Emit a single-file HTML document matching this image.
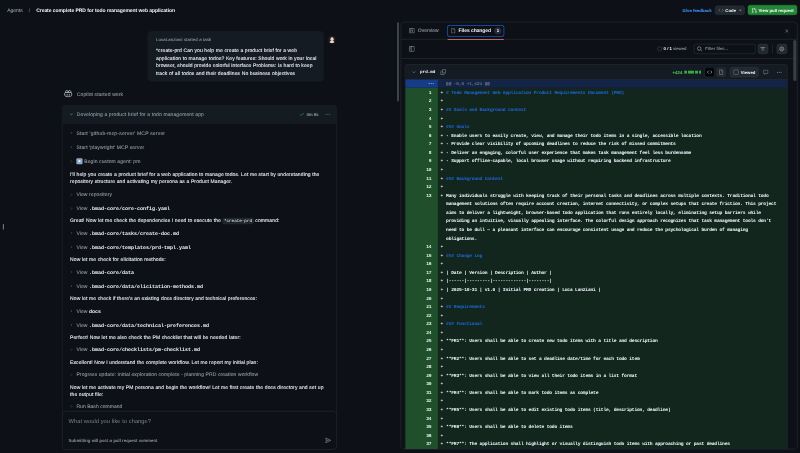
<!DOCTYPE html>
<html>
<head>
<meta charset="utf-8">
<title>Create complete PRD for todo management web application</title>
<style>
*{box-sizing:border-box;margin:0;padding:0}
html,body{width:800px;height:453px;overflow:hidden;background:#0d1117}
body{font-family:"Liberation Sans",sans-serif;color:#f0f6fc}
#root{position:absolute;left:0;top:0;width:2240px;height:1269px;transform:scale(0.35714);transform-origin:0 0;filter:brightness(1);text-rendering:geometricPrecision;background:#0d1117;font-size:14px;line-height:20px;overflow:hidden}
.mono{font-family:"Liberation Mono",monospace}
svg{display:block}
/* header */
#crumb{position:absolute;left:20px;top:18px;font-size:14px;line-height:20px;white-space:nowrap}
#crumb .a{color:#9198a1;-webkit-text-stroke:0.25px #9198a1}
#crumb .s{color:#9198a1;margin:0 17px 0 17px}
#crumb .t{color:#f0f6fc;font-weight:bold;letter-spacing:-0.18px}
#fb{position:absolute;left:1911px;top:19.5px;font-size:12px;line-height:20px;font-weight:bold;color:#3f89ea;-webkit-text-stroke:0.3px #3f89ea;white-space:nowrap}
.btn{position:absolute;height:28px;border-radius:6px;font-size:12px;line-height:26px;font-weight:bold;white-space:nowrap}
#codebtn{left:2002px;top:15.5px;height:25px;line-height:24px;width:83px;background:#212830;border:1px solid #3d444d;color:#f0f6fc}
#prbtn{left:2094px;top:14px;width:138px;background:#238636;border:1px solid #2ea043;color:#fff}
/* left pane */
#col{position:absolute;left:174px;top:0;width:768px;height:1269px}
#bubble{position:absolute;left:239px;top:87px;width:494px;height:141px;background:#151b23;border-radius:12px}
#bubble .who{position:absolute;left:24px;top:15px;font-size:12px;line-height:20px;color:#9198a1;white-space:nowrap;letter-spacing:0.31px;-webkit-text-stroke:0.25px #9198a1}
#bubble .msg{position:absolute;left:24px;top:43.8px;font-size:14px;line-height:21.2px;color:#f0f6fc;white-space:nowrap;font-weight:normal;-webkit-text-stroke:0.2px #f0f6fc;letter-spacing:0.3px}
#avatar{position:absolute;left:743px;top:99px;width:25px;height:25px}
#started{position:absolute;left:5px;top:253px;height:20px;white-space:nowrap;color:#9198a1;letter-spacing:0.3px;-webkit-text-stroke:0.25px #9198a1}
#started svg{position:absolute;left:0;top:-2px}
#started span{position:absolute;left:36px;top:0}
#card{position:absolute;left:0;top:295px;width:769px;height:870px;border-bottom:none;border:1px solid #2f353d;border-radius:6px;background:#0d1117}
#cardh{position:absolute;left:0;top:0;width:767px;height:50px;background:#151b23;border-bottom:1px solid #2f353d;border-radius:6px 6px 0 0}
#cardh .ttl{position:absolute;left:40px;top:14px;color:#9198a1;white-space:nowrap;letter-spacing:0.32px;-webkit-text-stroke:0.25px #9198a1}
#cardh .tm{position:absolute;left:683px;top:14px;font-size:12px;color:#a0a7b0;white-space:nowrap;letter-spacing:0.2px;-webkit-text-stroke:0.3px #a0a7b0}
.tool{position:absolute;left:18px;height:20px;white-space:nowrap;color:#9198a1;-webkit-text-stroke:0.25px #9198a1}
.tool .cv{position:absolute;left:0;top:2px}
.tool>span{position:absolute;left:22px;top:0}
.tool b{-webkit-text-stroke:0;color:#f0f6fc;font-size:14px;font-weight:bold;letter-spacing:0}
.para{position:absolute;left:22px;line-height:21px;white-space:nowrap;color:#f0f6fc;font-weight:normal;-webkit-text-stroke:0.2px #f0f6fc;letter-spacing:0.33px}
.para code{font-family:"Liberation Mono",monospace;font-size:11.9px;background:#1f242d;border-radius:6px;padding:2px 5px;margin:0 0 0 -1px;font-weight:normal;-webkit-text-stroke:0;letter-spacing:0}
.emo{display:inline-block;width:17px;height:17px;background:#86a6c8;border-radius:3px;vertical-align:-3px;margin-right:5px;position:relative;border:1px solid #b9cbe0}
.emo i{position:absolute;left:5px;top:3px;border-left:7px solid #fff;border-top:4.5px solid transparent;border-bottom:4.5px solid transparent}
#inp{position:absolute;left:0;top:1151px;width:769px;height:108px;border:1px solid #3d444d;border-radius:12px;background:#0d1117}
#inp .ph{position:absolute;left:17px;top:18px;color:#7a818b;font-size:16px;line-height:22px;white-space:nowrap;letter-spacing:0.17px}
#inp .sub{position:absolute;left:17px;top:71px;color:#9ba2ab;font-size:12px;white-space:nowrap;letter-spacing:0.42px;-webkit-text-stroke:0.25px #9ba2ab}
#inp svg{position:absolute;left:735px;top:72px}
/* right panel */
#panel{position:absolute;left:1122px;top:61px;width:1111px;height:1197px;border:1px solid #3d444d;border-radius:12px;background:#0d1117;overflow:hidden}
#tabs{position:absolute;left:0;top:0;width:1110px;height:48px;border-bottom:1px solid #3d444d}
#tools{position:absolute;left:0;top:48px;width:1110px;height:54px;border-bottom:1px solid #3d444d}
#ov{position:absolute;left:22px;top:14px;color:#9198a1;white-space:nowrap;-webkit-text-stroke:0.25px #9198a1}
#ov svg{position:absolute;left:0;top:2px}
#ov span{position:absolute;left:25px;top:0}
#fc{position:absolute;left:131px;top:10px;width:156px;height:29px;border-radius:5px;box-shadow:0 0 0 2px #1b58bd;white-space:nowrap}
#fc svg{position:absolute;left:7px;top:6px}
#fc b{position:absolute;left:30px;top:4px;letter-spacing:-0.2px}
#fc i{position:absolute;left:130px;top:4px;width:20px;height:20px;border-radius:10px;background:#262d37;font-style:normal;font-size:12px;font-weight:bold;text-align:center;line-height:20px}
#fcu{position:absolute;left:130px;top:46.5px;width:158px;height:2px;background:#f78166;border-radius:1px}
#file{position:absolute;left:11px;top:118px;width:1071px;height:1200px;border:1px solid #3d444d;border-radius:6px;overflow:hidden;background:#151b23}
#fh{position:absolute;left:0;top:0;width:1070px;height:41.5px;background:#151b23;border-bottom:1px solid #3d444d}
#hunk{position:absolute;left:0;top:41.5px;width:1070px;height:23.5px;background:#132446}
#hunk .g{position:absolute;left:0;top:0;width:90.5px;height:23.5px;background:#163b87}
#hunk .t{position:absolute;left:114px;top:0;font:12px/22px "Liberation Mono",monospace;color:#9198a1;white-space:nowrap}
#lines{position:absolute;left:0;top:65px;padding-top:1.5px;width:1070px;min-height:1200px;background:#12261e}
#gut{position:absolute;left:0;top:0;width:90.5px;height:1200px;background:#1f502b}
.dl{position:relative;font:13px/24px "Liberation Mono",monospace;letter-spacing:-0.578px;color:#f0f6fc;white-space:nowrap;padding-left:114px;min-height:24px;font-weight:bold}
.dl .ln{position:absolute;left:0;top:0;width:73px;text-align:right;color:#e6f2e8;font-weight:bold}
.dl .mk{position:absolute;left:98.5px;top:0;font-weight:normal}
.dl .h{color:#1d66d8;font-weight:bold}
#sb{position:absolute;left:2221px;top:112px;width:9px;height:115px;border-radius:5px;background:#383d46}
</style>
</head>
<body>
<div id="root">
  <div id="crumb"><span class="a">Agents</span><span class="s">/</span><span class="t">Create complete PRD for todo management web application</span></div>
  <div id="fb">Give feedback</div>
  <div class="btn" id="codebtn"><svg style="position:absolute;left:8px;top:4px" width="16" height="16" viewBox="0 0 16 16"><path d="M5.500 4L1.500 8l4 4M10.500 4l4 4-4 4" fill="none" stroke="#9198a1" stroke-width="1.5"/></svg><span style="position:absolute;left:28px;top:0">Code</span><svg style="position:absolute;left:62px;top:4px" width="16" height="16" viewBox="0 0 16 16"><path d="M4.500 6.500h7L8 10.500z" fill="#9198a1"/></svg></div>
  <div class="btn" id="prbtn"><svg style="position:absolute;left:9px;top:6px" width="16" height="16" viewBox="0 0 16 16"><circle cx="3.500" cy="3.500" r="1.700" fill="none" stroke="#fff" stroke-width="1.400"/><circle cx="3.500" cy="12.500" r="1.700" fill="none" stroke="#fff" stroke-width="1.400"/><circle cx="12.500" cy="12.500" r="1.700" fill="none" stroke="#fff" stroke-width="1.400"/><path d="M3.500 5.200v5.600M12.500 10.800V6a2 2 0 00-2-2H8M9.800 1.800L7.600 4l2.200 2.200" fill="none" stroke="#fff" stroke-width="1.400"/></svg><span style="position:absolute;left:29px;top:1.5px">View pull request</span></div>

  <div id="col">
    <div id="bubble">
      <div class="who">LucaLanziani started a task</div>
      <div class="msg">*create-prd Can you help me create a product brief for a web<br>application to manage todos? Key features: Should work in your local<br>browser, should provide colorful interface Problems: Is hard to keep<br>track of all todos and their deadlines No business objectives</div>
    </div>
    <svg id="avatar" viewBox="0 0 24 24"><circle cx="12" cy="12" r="12" fill="#1d1716"/><ellipse cx="12" cy="10.5" rx="6.5" ry="7" fill="#33231f"/><ellipse cx="12.200" cy="10.300" rx="4.400" ry="5.400" fill="#cdb9b8"/><ellipse cx="12.500" cy="10" rx="3" ry="4" fill="#e4d6d6"/><ellipse cx="12" cy="18" rx="6.500" ry="2.700" fill="#e6e6e6"/></svg>
    <div id="started"><svg width="24" height="22" viewBox="0 0 24 22"><path d="M2 11.5c0-2 1-3 2.5-3.5h15c1.500.5 2.500 1.500 2.500 3.500v4c0 1.500-4 4.500-10 4.500s-10-3-10-4.500z" fill="none" stroke="#d1d7e0" stroke-width="2"/><path d="M4.500 8.500c-.8-3 .5-6 3.500-6s3.800 2 3.500 5M19.500 8.500c.8-3-.5-6-3.500-6s-3.800 2-3.500 5" fill="none" stroke="#d1d7e0" stroke-width="2"/><path d="M9 13v3M15 13v3" stroke="#d1d7e0" stroke-width="2" stroke-linecap="round"/></svg><span>Copilot started work</span></div>
    <div id="card">
      <div id="cardh">
        <svg style="position:absolute;left:17px;top:16px" width="16" height="16" viewBox="0 0 16 16"><path d="M4 6l4 4 4-4" fill="none" stroke="#9198a1" stroke-width="1.5"/></svg>
        <div class="ttl">Developing a product brief for a todo management app</div>
        <svg style="position:absolute;left:662px;top:16px" width="16" height="16" viewBox="0 0 16 16"><path d="M3 8.5l3 3 7-7" fill="none" stroke="#3fb950" stroke-width="1.7"/></svg>
        <div class="tm">3m 8s</div>
        <svg style="position:absolute;left:735px;top:16px" width="16" height="16" viewBox="0 0 16 16"><circle cx="3" cy="8" r="1.4" fill="#656c76"/><circle cx="8" cy="8" r="1.4" fill="#656c76"/><circle cx="13" cy="8" r="1.4" fill="#656c76"/></svg>
      </div>
    </div>
    <div id="items" style="position:absolute;left:0;top:0">
<div class="tool" style="top:362px;letter-spacing:0.54px"><svg class="cv" width="16" height="16" viewBox="0 0 16 16"><path d="M6.5 5l3 3-3 3" fill="none" stroke="#6a717b" stroke-width="1.4"/></svg><span>Start 'github-mcp-server' MCP server</span></div>
<div class="tool" style="top:402px;letter-spacing:0.38px"><svg class="cv" width="16" height="16" viewBox="0 0 16 16"><path d="M6.5 5l3 3-3 3" fill="none" stroke="#6a717b" stroke-width="1.4"/></svg><span>Start 'playwright' MCP server</span></div>
<div class="tool" style="top:442px;letter-spacing:0.28px"><svg class="cv" width="16" height="16" viewBox="0 0 16 16"><path d="M6.5 5l3 3-3 3" fill="none" stroke="#6a717b" stroke-width="1.4"/></svg><span><span class="emo"><i></i></span>Begin custom agent: pm</span></div>
<div class="para" style="top:476.5px">I'll help you create a product brief for a web application to manage todos. Let me start by understanding the<br>repository structure and activating my persona as a Product Manager.</div>
<div class="tool" style="top:534.5px;letter-spacing:0.28px"><svg class="cv" width="16" height="16" viewBox="0 0 16 16"><path d="M6.5 5l3 3-3 3" fill="none" stroke="#6a717b" stroke-width="1.4"/></svg><span>View repository</span></div>
<div class="tool" style="top:573.5px;letter-spacing:0.28px"><svg class="cv" width="16" height="16" viewBox="0 0 16 16"><path d="M6.5 5l3 3-3 3" fill="none" stroke="#6a717b" stroke-width="1.4"/></svg><span>View <b class="mono">.bmad-core/core-config.yaml</b></span></div>
<div class="para" style="top:607.0px">Great! Now let me check the dependencies I need to execute the <code>*create-prd</code> command:</div>
<div class="tool" style="top:642px;letter-spacing:0.28px"><svg class="cv" width="16" height="16" viewBox="0 0 16 16"><path d="M6.5 5l3 3-3 3" fill="none" stroke="#6a717b" stroke-width="1.4"/></svg><span>View <b class="mono">.bmad-core/tasks/create-doc.md</b></span></div>
<div class="tool" style="top:682px;letter-spacing:0.28px"><svg class="cv" width="16" height="16" viewBox="0 0 16 16"><path d="M6.5 5l3 3-3 3" fill="none" stroke="#6a717b" stroke-width="1.4"/></svg><span>View <b class="mono">.bmad-core/templates/prd-tmpl.yaml</b></span></div>
<div class="para" style="top:716.5px">Now let me check for elicitation methods:</div>
<div class="tool" style="top:752px;letter-spacing:0.28px"><svg class="cv" width="16" height="16" viewBox="0 0 16 16"><path d="M6.5 5l3 3-3 3" fill="none" stroke="#6a717b" stroke-width="1.4"/></svg><span>View <b class="mono">.bmad-core/data</b></span></div>
<div class="tool" style="top:791px;letter-spacing:0.28px"><svg class="cv" width="16" height="16" viewBox="0 0 16 16"><path d="M6.5 5l3 3-3 3" fill="none" stroke="#6a717b" stroke-width="1.4"/></svg><span>View <b class="mono">.bmad-core/data/elicitation-methods.md</b></span></div>
<div class="para" style="top:825.5px">Now let me check if there's an existing docs directory and technical preferences:</div>
<div class="tool" style="top:861px;letter-spacing:0.28px"><svg class="cv" width="16" height="16" viewBox="0 0 16 16"><path d="M6.5 5l3 3-3 3" fill="none" stroke="#6a717b" stroke-width="1.4"/></svg><span>View <b class="mono">docs</b></span></div>
<div class="tool" style="top:900px;letter-spacing:0.28px"><svg class="cv" width="16" height="16" viewBox="0 0 16 16"><path d="M6.5 5l3 3-3 3" fill="none" stroke="#6a717b" stroke-width="1.4"/></svg><span>View <b class="mono">.bmad-core/data/technical-preferences.md</b></span></div>
<div class="para" style="top:934.5px">Perfect! Now let me also check the PM checklist that will be needed later:</div>
<div class="tool" style="top:969px;letter-spacing:0.28px"><svg class="cv" width="16" height="16" viewBox="0 0 16 16"><path d="M6.5 5l3 3-3 3" fill="none" stroke="#6a717b" stroke-width="1.4"/></svg><span>View <b class="mono">.bmad-core/checklists/pm-checklist.md</b></span></div>
<div class="para" style="top:1003.5px">Excellent! Now I understand the complete workflow. Let me report my initial plan:</div>
<div class="tool" style="top:1039px;letter-spacing:0.28px"><svg class="cv" width="16" height="16" viewBox="0 0 16 16"><path d="M6.5 5l3 3-3 3" fill="none" stroke="#6a717b" stroke-width="1.4"/></svg><span>Progress update: Initial exploration complete - planning PRD creation workflow</span></div>
<div class="para" style="top:1073.5px">Now let me activate my PM persona and begin the workflow! Let me first create the docs directory and set up<br>the output file:</div>
<div class="tool" style="top:1128px;letter-spacing:0.12px"><svg class="cv" width="16" height="16" viewBox="0 0 16 16"><path d="M6.5 5l3 3-3 3" fill="none" stroke="#6a717b" stroke-width="1.4"/></svg><span>Run Bash command</span></div>
    </div>
    <div id="inp">
      <div class="ph">What would you like to change?</div>
      <div class="sub">Submitting will post a pull request comment</div>
      <svg width="18" height="18" viewBox="0 0 16 16"><path d="M1.800 2l12.700 6-12.700 6 1.700-6z M3.500 8h6" fill="none" stroke="#9198a1" stroke-width="1.400" stroke-linejoin="round"/></svg>
    </div>
  </div>

  <div id="panel">
    <div id="tabs">
      <div id="ov"><svg width="16" height="16" viewBox="0 0 16 16"><rect x="0.8" y="1.8" width="14.4" height="12.4" rx="1.5" fill="none" stroke="#a4abb5" stroke-width="1.6"/><path d="M3.5 5.5h4M3.5 8h4M3.5 10.500h2.500M10 5v6" fill="none" stroke="#a4abb5" stroke-width="1.5"/></svg><span>Overview</span></div>
      <div id="fc"><svg width="16" height="16" viewBox="0 0 16 16"><path d="M3.5 1.5h6l3 3v10h-9z M9.5 1.5v3h3" fill="none" stroke="#9198a1" stroke-width="1.4" stroke-linejoin="round"/></svg><b>Files changed</b><i>1</i></div>
      <div id="fcu"></div>
      <svg style="position:absolute;left:1072px;top:17px" width="16" height="16" viewBox="0 0 16 16"><path d="M4 4l8 8M12 4l-8 8" stroke="#9198a1" stroke-width="1.5"/></svg>
    </div>
    <div id="tools">
      <svg style="position:absolute;left:22px;top:19px" width="16" height="16" viewBox="0 0 16 16"><rect x="1" y="1" width="14" height="14" rx="1.5" fill="none" stroke="#a4abb5" stroke-width="1.6"/><path d="M6.500 1v14M3 4.500h1.500M3 7h1.500" stroke="#a4abb5" stroke-width="1.5"/></svg>
      <svg style="position:absolute;left:716px;top:19px" width="16" height="16" viewBox="0 0 16 16"><circle cx="8" cy="8" r="6" fill="none" stroke="#3d444d" stroke-width="1.8"/></svg>
      <div style="position:absolute;left:735px;top:17px;font-size:12px;white-space:nowrap"><b>0 / 1</b> <span style="color:#9198a1;-webkit-text-stroke:0.25px #9198a1">viewed</span></div>
      <div style="position:absolute;left:820px;top:13px;width:173px;height:28px;border:1px solid #3d444d;border-radius:6px">
        <svg style="position:absolute;left:7px;top:5px" width="16" height="16" viewBox="0 0 16 16"><circle cx="6.800" cy="6.800" r="5" fill="none" stroke="#a4abb5" stroke-width="1.700"/><path d="M10.500 10.500l4.500 4.500" stroke="#a4abb5" stroke-width="1.700"/></svg>
        <div style="position:absolute;left:31px;top:3px;font-size:12px;color:#8b929c;-webkit-text-stroke:0.25px #8b929c;letter-spacing:0.2px;white-space:nowrap">Filter files...</div>
      </div>
      <div style="position:absolute;left:999px;top:13px;width:29px;height:28px;border:1px solid #3d444d;border-radius:6px;background:#212830"><svg style="position:absolute;left:5px;top:5px" width="16" height="16" viewBox="0 0 16 16"><path d="M1.500 4h13M4 8h8M6.500 12h3" stroke="#a4abb5" stroke-width="1.700"/></svg></div>
      <div style="position:absolute;left:1039px;top:14px;width:1px;height:26px;background:#3d444d"></div><div style="position:absolute;left:1052px;top:13px;width:29px;height:28px;border:1px solid #3d444d;border-radius:6px;background:#212830"><svg style="position:absolute;left:5px;top:5px" width="16" height="16" viewBox="0 0 16 16"><circle cx="8" cy="8" r="6.400" fill="none" stroke="#9aa1ab" stroke-width="1.800" stroke-dasharray="2.700 2.327"/><circle cx="8" cy="8" r="5" fill="none" stroke="#9aa1ab" stroke-width="1.500"/><circle cx="8" cy="8" r="2" fill="none" stroke="#9aa1ab" stroke-width="1.300"/></svg></div>
    </div>
    <div id="file">
      <div id="fh">
        <svg style="position:absolute;left:16px;top:13px" width="16" height="16" viewBox="0 0 16 16"><path d="M4 6l4 4 4-4" fill="none" stroke="#9198a1" stroke-width="1.5"/></svg>
        <div class="mono" style="position:absolute;left:41px;top:11px;font-size:12px;font-weight:bold;white-space:nowrap">prd.md</div>
        <svg style="position:absolute;left:98px;top:13px" width="16" height="16" viewBox="0 0 16 16"><rect x="5.5" y="0.800" width="9.700" height="9.700" rx="1.200" fill="none" stroke="#a4abb5" stroke-width="1.600"/><path d="M3 5.500H1.800a1 1 0 00-1 1v7.700a1 1 0 001 1h7.700a1 1 0 001-1V13" fill="none" stroke="#a4abb5" stroke-width="1.600"/></svg>
        <div style="position:absolute;left:748px;top:11px;font-size:12px;font-weight:bold;color:#3fb950;-webkit-text-stroke:0.3px #3fb950;letter-spacing:0.3px;white-space:nowrap">+424</div>
        <div style="position:absolute;left:781px;top:17px;width:48px;height:8px;background:repeating-linear-gradient(90deg,#35aa48 0 8px,transparent 8px 10px)"></div>
        <div style="position:absolute;left:838px;top:7px;width:28px;height:28px;border-radius:6px;background:#010409;border:1px solid #3d444d"><svg style="position:absolute;left:5px;top:5px" width="16" height="16" viewBox="0 0 16 16"><path d="M5.5 4L1.5 8l4 4M10.5 4l4 4-4 4" fill="none" stroke="#f0f6fc" stroke-width="1.5"/></svg></div>
        <div style="position:absolute;left:870px;top:7px;width:28px;height:28px;border-radius:6px;background:#212830"><svg style="position:absolute;left:6px;top:6px" width="16" height="16" viewBox="0 0 16 16"><path d="M3.5 1.5h6l3 3v10h-9z M9.5 1.5v3h3" fill="none" stroke="#9198a1" stroke-width="1.4" stroke-linejoin="round"/></svg></div>
        <div style="position:absolute;left:909px;top:7px;width:80px;height:28px;border-radius:6px;background:#212830;border:1px solid #3d444d"><div style="position:absolute;left:9px;top:6px;width:14px;height:14px;border:1.500px solid #a4abb5;border-radius:2.500px"></div><b style="position:absolute;left:29px;top:3px;font-size:12px">Viewed</b></div>
        <svg style="position:absolute;left:1001px;top:13px" width="16" height="16" viewBox="0 0 16 16"><path d="M2.5 2.5h11a1 1 0 011 1v7a1 1 0 01-1 1H8l-3 3v-3H2.5a1 1 0 01-1-1v-7a1 1 0 011-1z" fill="none" stroke="#9198a1" stroke-width="1.4" stroke-linejoin="round"/></svg>
        <svg style="position:absolute;left:1039px;top:13px" width="16" height="16" viewBox="0 0 16 16"><circle cx="3" cy="8" r="1.4" fill="#9198a1"/><circle cx="8" cy="8" r="1.4" fill="#9198a1"/><circle cx="13" cy="8" r="1.4" fill="#9198a1"/></svg>
      </div>
      <div id="hunk"><div class="g"></div><div style="position:absolute;left:65px;top:-1px;font:bold 14px/22px 'Liberation Sans',sans-serif;color:#dbe6f5;letter-spacing:1px">&middot;&middot;&middot;</div><div class="t">@@ -0,0 +1,424 @@</div></div>
      <div id="lines"><div id="gut"></div>
<div class="dl"><span class="ln">1</span><span class="mk">+</span><span class="h"># Todo Management Web Application Product Requirements Document (PRD)</span></div>
<div class="dl"><span class="ln">2</span><span class="mk">+</span><span></span></div>
<div class="dl"><span class="ln">3</span><span class="mk">+</span><span class="h">## Goals and Background Context</span></div>
<div class="dl"><span class="ln">4</span><span class="mk">+</span><span></span></div>
<div class="dl"><span class="ln">5</span><span class="mk">+</span><span class="h">### Goals</span></div>
<div class="dl"><span class="ln">6</span><span class="mk">+</span><span>- Enable users to easily create, view, and manage their todo items in a single, accessible location</span></div>
<div class="dl"><span class="ln">7</span><span class="mk">+</span><span>- Provide clear visibility of upcoming deadlines to reduce the risk of missed commitments</span></div>
<div class="dl"><span class="ln">8</span><span class="mk">+</span><span>- Deliver an engaging, colorful user experience that makes task management feel less burdensome</span></div>
<div class="dl"><span class="ln">9</span><span class="mk">+</span><span>- Support offline-capable, local browser usage without requiring backend infrastructure</span></div>
<div class="dl"><span class="ln">10</span><span class="mk">+</span><span></span></div>
<div class="dl"><span class="ln">11</span><span class="mk">+</span><span class="h">### Background Context</span></div>
<div class="dl"><span class="ln">12</span><span class="mk">+</span><span></span></div>
<div class="dl"><span class="ln">13</span><span class="mk">+</span><span>Many individuals struggle with keeping track of their personal tasks and deadlines across multiple contexts. Traditional todo<br>management solutions often require account creation, internet connectivity, or complex setups that create friction. This project<br>aims to deliver a lightweight, browser-based todo application that runs entirely locally, eliminating setup barriers while<br>providing an intuitive, visually appealing interface. The colorful design approach recognizes that task management tools don't<br>need to be dull &mdash; a pleasant interface can encourage consistent usage and reduce the psychological burden of managing<br>obligations.</span></div>
<div class="dl"><span class="ln">14</span><span class="mk">+</span><span></span></div>
<div class="dl"><span class="ln">15</span><span class="mk">+</span><span class="h">### Change Log</span></div>
<div class="dl"><span class="ln">16</span><span class="mk">+</span><span></span></div>
<div class="dl"><span class="ln">17</span><span class="mk">+</span><span>| Date | Version | Description | Author |</span></div>
<div class="dl"><span class="ln">18</span><span class="mk">+</span><span>|------|---------|-------------|--------|</span></div>
<div class="dl"><span class="ln">19</span><span class="mk">+</span><span>| 2025-10-31 | v1.0 | Initial PRD creation | Luca Lanziani |</span></div>
<div class="dl"><span class="ln">20</span><span class="mk">+</span><span></span></div>
<div class="dl"><span class="ln">21</span><span class="mk">+</span><span class="h">## Requirements</span></div>
<div class="dl"><span class="ln">22</span><span class="mk">+</span><span></span></div>
<div class="dl"><span class="ln">23</span><span class="mk">+</span><span class="h">### Functional</span></div>
<div class="dl"><span class="ln">24</span><span class="mk">+</span><span></span></div>
<div class="dl"><span class="ln">25</span><span class="mk">+</span><span><b>**FR1**</b>: Users shall be able to create new todo items with a title and description</span></div>
<div class="dl"><span class="ln">26</span><span class="mk">+</span><span></span></div>
<div class="dl"><span class="ln">27</span><span class="mk">+</span><span><b>**FR2**</b>: Users shall be able to set a deadline date/time for each todo item</span></div>
<div class="dl"><span class="ln">28</span><span class="mk">+</span><span></span></div>
<div class="dl"><span class="ln">29</span><span class="mk">+</span><span><b>**FR3**</b>: Users shall be able to view all their todo items in a list format</span></div>
<div class="dl"><span class="ln">30</span><span class="mk">+</span><span></span></div>
<div class="dl"><span class="ln">31</span><span class="mk">+</span><span><b>**FR4**</b>: Users shall be able to mark todo items as complete</span></div>
<div class="dl"><span class="ln">32</span><span class="mk">+</span><span></span></div>
<div class="dl"><span class="ln">33</span><span class="mk">+</span><span><b>**FR5**</b>: Users shall be able to edit existing todo items (title, description, deadline)</span></div>
<div class="dl"><span class="ln">34</span><span class="mk">+</span><span></span></div>
<div class="dl"><span class="ln">35</span><span class="mk">+</span><span><b>**FR6**</b>: Users shall be able to delete todo items</span></div>
<div class="dl"><span class="ln">36</span><span class="mk">+</span><span></span></div>
<div class="dl"><span class="ln">37</span><span class="mk">+</span><span><b>**FR7**</b>: The application shall highlight or visually distinguish todo items with approaching or past deadlines</span></div>
<div class="dl"><span class="ln">38</span><span class="mk">+</span><span></span></div>
<div class="dl"><span class="ln">39</span><span class="mk">+</span><span><b>**FR8**</b>: The application shall persist all todo data in browser local storage</span></div>
      </div>
    </div>
  </div>
  <div id="sb"></div>
  <div style="position:absolute;left:1112px;top:62px;width:5px;height:222px;border-radius:3px;background:#434a54"></div>
  <div style="position:absolute;left:8px;top:627px;width:3px;height:16px;border-radius:2px;background:#767d86"></div>
</div>
</body>
</html>
